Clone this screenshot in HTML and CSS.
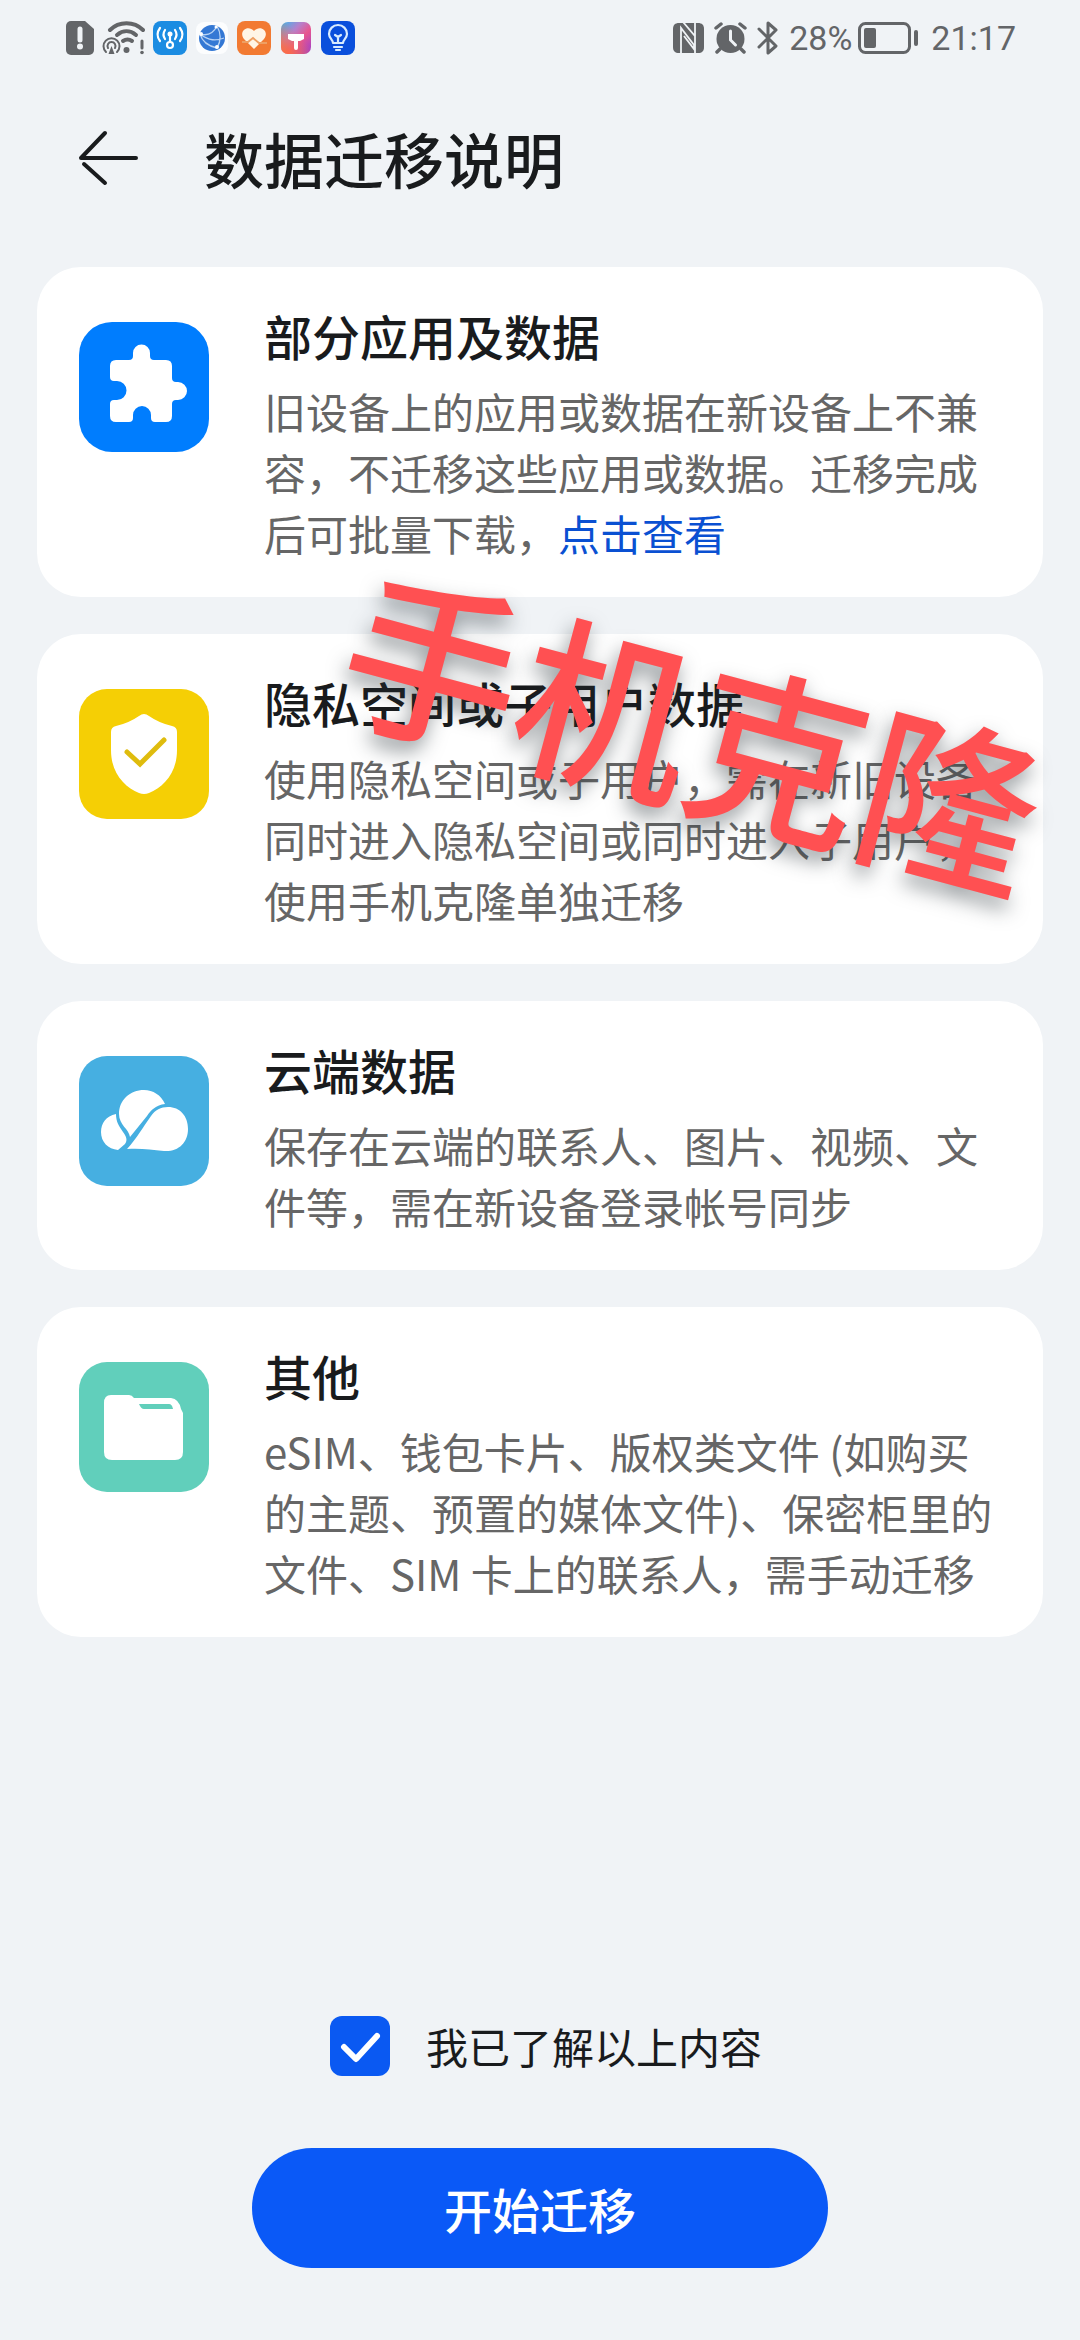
FILE: index.html
```html
<!DOCTYPE html>
<html lang="zh-CN">
<head>
<meta charset="utf-8">
<meta name="viewport" content="width=device-width, initial-scale=1">
<title>数据迁移说明</title>
<link rel="stylesheet" href="styles.css">
</head>
<body>
<div class="screen">
  <div class="status">
    <div class="status-left">
      <svg width="28" height="34" viewBox="0 0 28 34"><path d="M5 0h14l9 8v21a5 5 0 0 1-5 5H5a5 5 0 0 1-5-5V5a5 5 0 0 1 5-5z" fill="#636568"/><path d="M14 8v11" stroke="#f0f3f6" stroke-width="5" stroke-linecap="round"/><circle cx="14" cy="25.500" r="3" fill="#f0f3f6"/></svg>
      <svg class="wifi" width="43" height="34" viewBox="0 0 43 34" fill="none" stroke="#636568" stroke-linecap="round"><path d="M8 9C17 0 32 0 41 9" stroke-width="4"/><path d="M15 14c6-5 13-5 19 0" stroke-width="4"/><path d="M21 20c3-2 6-2 9 0" stroke-width="4"/><circle cx="24.500" cy="29" r="3" fill="#636568" stroke="none"/><path d="M40 20v7" stroke-width="3"/><circle cx="40" cy="31.500" r="1.800" fill="#636568" stroke="none"/><path d="M4 31a8 8 0 1 1 11 0M6 27a4 4 0 1 1 7 0" stroke-width="2"/><path d="M9.500 25l-3 8h6z" fill="#636568" stroke="none"/></svg>
      <svg class="gap-s" width="34" height="34" viewBox="0 0 34 34"><rect width="34" height="34" rx="8" fill="#1b8ce2"/><g fill="none" stroke="#fff" stroke-width="2.200" stroke-linecap="round"><path d="M7 7c-3 4-3 9 0 13M12 9c-2 3-2 6 0 9M27 7c3 4 3 9 0 13M22 9c2 3 2 6 0 9M17 13v8"/><circle cx="17" cy="24" r="3"/></g><circle cx="17" cy="13" r="2.500" fill="#fff"/></svg>
      <svg class="gap-s" width="34" height="34" viewBox="0 0 34 34"><rect x="1" y="1" width="32" height="32" rx="8" fill="#fcfdfe"/><circle cx="17" cy="17" r="13" fill="#3478d4"/><g fill="none" stroke="#b8d3f4" stroke-width="1.300"><path d="M5 13c7 2 13 0 17-8M5 13c2 7 8 12 17 14M22 5c4 7 4 15 0 22M5 13c9 7 16 7 24 4"/></g><g fill="#fff"><circle cx="6" cy="13" r="2"/><circle cx="21" cy="6" r="1.500"/><circle cx="22" cy="26" r="2"/></g></svg>
      <svg width="34" height="34" viewBox="0 0 34 34"><rect width="34" height="34" rx="8" fill="#f27a32"/><path d="M17 28L7 18C1 10 11 3 17 10c6-7 16 0 10 8z" fill="#fff5e6"/><path d="M5 21h6l5-4 6 5h8" fill="none" stroke="#ee9f62" stroke-width="1.800"/></svg>
      <svg width="30" height="32" viewBox="0 0 30 32"><defs><linearGradient id="paint" x1="0" y1="0" x2="1" y2="1"><stop offset="0" stop-color="#38b8ee"/><stop offset=".35" stop-color="#b580cc"/><stop offset=".6" stop-color="#e8568e"/><stop offset="1" stop-color="#9a3ed0"/></linearGradient><linearGradient id="warm" x1="0" y1="1" x2=".6" y2=".4"><stop offset="0" stop-color="#ff7038"/><stop offset="1" stop-color="#ff7038" stop-opacity="0"/></linearGradient></defs><rect width="30" height="32" rx="7" fill="url(#paint)"/><rect width="30" height="32" rx="7" fill="url(#warm)"/><path d="M7 12h16v5l-4 2h-2v7a2 2 0 0 1-4 0v-7h-2l-4-2z" fill="#fff"/></svg>
      <svg width="34" height="34" viewBox="0 0 34 34"><rect width="34" height="34" rx="8" fill="#0a4fdc"/><g fill="none" stroke="#d9ecff" stroke-width="2.200" stroke-linecap="round" stroke-linejoin="round"><path d="M12 22c0-3-4-5-4-9a9 9 0 0 1 18 0c0 4-4 6-4 9zM13 26h8M15 29h4M14 14l3 2 3-2M17 16v5"/></g></svg>
    </div>
    <div class="status-right">
      <svg width="31" height="32" viewBox="0 0 31 32"><path d="M6 1h19c4 0 6 2 6 6v18c0 4-2 6-6 6H6c-4 0-6-2-6-6V7c0-4 2-6 6-6z" fill="#636568"/><path d="M8 32V6l13 17v4L11 14M10 0l12 14V0M22 8v24" fill="none" stroke="#f0f3f6" stroke-width="1.800"/></svg>
      <svg width="33" height="32" viewBox="0 0 33 32"><circle cx="16.500" cy="17" r="14" fill="#636568"/><path d="M2 6l5-4M31 6l-5-4M6 27l-3 3M27 27l3 3" stroke="#636568" stroke-width="3.500" stroke-linecap="round"/><path d="M16.500 9v9l5 5" fill="none" stroke="#f0f3f6" stroke-width="3" stroke-linecap="round"/></svg>
      <svg width="22" height="34" viewBox="0 0 22 34"><path d="M2 8l17 17-8 7V2l8 7L2 26" fill="none" stroke="#636568" stroke-width="3" stroke-linecap="round" stroke-linejoin="round"/></svg>
      <span class="percent">28%</span>
      <svg width="61" height="32" viewBox="0 0 61 32"><rect x="1.500" y="1.500" width="50" height="29" rx="6" fill="none" stroke="#636568" stroke-width="3"/><rect x="6" y="6" width="12" height="20" rx="2" fill="#636568"/><rect x="56" y="8" width="4" height="16" rx="2" fill="#636568"/></svg>
      <time>21:17</time>
    </div>
  </div>

  <header class="topbar">
    <button class="back" type="button" aria-label="返回"><svg width="60" height="56" viewBox="0 0 60 56" fill="none" stroke="#191b1d" stroke-width="4" stroke-linecap="round"><path d="M58 28H3L27 3M6 34l21 19" stroke-linejoin="round"/></svg></button>
    <h1>数据迁移说明</h1>
  </header>

  <main class="cards">
    <section class="card">
      <svg class="tile" viewBox="0 0 130 130"><rect width="130" height="130" rx="33" fill="#007dfe"/><path d="M37 38h13q4 0 4-4v-3a8.500 8.500 0 0 1 17 0v3q0 4 4 4h12q6 0 6 6v12q0 4 4 4h2a9 9 0 0 1 0 18h-2q-4 0-4 4v12q0 6-6 6H76q-4 0-4-4v-3a9 9 0 0 0-18 0v3q0 4-4 4H37q-6 0-6-6V82q0-4 4-4h3a9.500 9.500 0 0 0 0-19h-3q-4 0-4-4V44q0-6 6-6z" fill="#fff"/></svg>
      <div class="info">
        <h2>部分应用及数据</h2>
        <p>旧设备上的应用或数据在新设备上不兼容，不迁移这些应用或数据。迁移完成后可批量下载，<a href="#">点击查看</a></p>
      </div>
    </section>
    <section class="card">
      <svg class="tile" viewBox="0 0 130 130"><rect width="130" height="130" rx="28" fill="#f5cf05"/><path d="M60 27q5-4 10 0 10 7 23 10 5 1 5 6v18c0 24-14 37-28 43q-5 2-10 0C46 98 32 85 32 61V43q0-5 5-6 13-3 23-10z" fill="#fff"/><path d="M48 63l13 12 24-24" fill="none" stroke="#dfbc0d" stroke-width="5" stroke-linecap="round"/></svg>
      <div class="info">
        <h2>隐私空间或子用户数据</h2>
        <p>使用隐私空间或子用户，需在新旧设备同时进入隐私空间或同时进入子用户，使用手机克隆单独迁移</p>
      </div>
    </section>
    <section class="card">
      <svg class="tile" viewBox="0 0 130 130"><rect width="130" height="130" rx="28" fill="#46afe1"/><g fill="#fff"><path d="M37 58C27 60 22 67 22 76c0 10 7 17 17 18l7-6c3-4 1-8-2-12-4-6-7-10-7-18z"/><path d="M40 58c0-14 11-24 25-24 9 0 17 5 21 14-9 1-14 6-18 12L51 81c-1-8-11-12-11-23z"/><path d="M48 93C58 82 64 71 72 60c4-6 10-9 17-9 12 0 20 9 20 22 0 14-10 23-24 22-13-1-22-3-37-2z"/></g></svg>
      <div class="info">
        <h2>云端数据</h2>
        <p>保存在云端的联系人、图片、视频、文件等，需在新设备登录帐号同步</p>
      </div>
    </section>
    <section class="card">
      <svg class="tile" viewBox="0 0 130 130"><rect width="130" height="130" rx="28" fill="#61cfbb"/><path d="M32 33h18q3 0 5 3h37q8 1 10 11l2 4v39q0 8-8 8H33q-8 0-8-8V41q0-8 7-8z" fill="#fff"/><path d="M60 42h30q3 0 4 5H65q-3 0-5-5z" fill="#61cfbb"/></svg>
      <div class="info">
        <h2>其他</h2>
        <p>eSIM、钱包卡片、版权类文件 (如购买的主题、预置的媒体文件)、保密柜里的文件、SIM 卡上的联系人，需手动迁移</p>
      </div>
    </section>
    <div class="stamp">手机克隆</div>
  </main>

  <footer class="actions">
    <label class="agree"><input type="checkbox" checked><span>我已了解以上内容</span></label>
    <button class="start" type="button">开始迁移</button>
  </footer>
</div>
</body>
</html>
```
FILE: styles.css
```css
* { box-sizing: border-box; }
body {
  margin: 0;
  background: #f0f3f6;
  color: #191b1d;
  font-family: "Noto Sans CJK SC", sans-serif;
}
h1, h2, p { margin: 0; }
svg { display: block; flex: none; }
button { border: 0; padding: 0; font: inherit; cursor: pointer; }

.screen {
  min-height: 100vh;
  display: flex;
  flex-direction: column;
}

.status {
  display: flex;
  justify-content: space-between;
  align-items: center;
  height: 76px;
  padding: 0 64px 0 66px;
  color: #636568;
  font: 400 34px/40px Roboto, sans-serif;
}
.status-left, .status-right { display: flex; align-items: center; gap: 10px; }
.wifi { margin: 0 -2px; }
.gap-s { margin-right: -2px; }
.percent { margin-right: -4px; }
.status-right time { margin-left: 2px; }

.topbar {
  display: flex;
  align-items: center;
  gap: 66px;
  padding: 42px 78px 44px;
}
.back { background: none; }
.topbar h1 { font-size: 60px; font-weight: 500; line-height: 80px; }

.cards {
  position: relative;
  display: flex;
  flex-direction: column;
  gap: 37px;
  margin-top: 25px;
  padding: 0 37px;
}
.card {
  display: flex;
  align-items: flex-start;
  gap: 55px;
  padding: 35px 42px 34px;
  border-radius: 44px;
  background: #fff;
}
.tile { width: 130px; height: 130px; margin-top: 20px; }
.info { flex: 1; }
.info h2 { font-size: 48px; font-weight: 500; line-height: 66px; }
.info p {
  margin-top: 12px;
  color: #666;
  font-size: 42px;
  line-height: 61px;
}
.info a { color: #0a50d2; text-decoration: none; }

.stamp {
  position: absolute;
  top: 458px;
  left: 694px;
  color: #ff5052;
  font-size: 178px;
  font-weight: 500;
  line-height: 1;
  white-space: nowrap;
  text-shadow: 0 10px 20px rgba(40, 50, 55, .5);
  transform: translate(-50%, -50%) rotate(15deg);
  pointer-events: none;
}

.actions {
  display: flex;
  flex-direction: column;
  align-items: center;
  gap: 72px;
  margin-top: auto;
  padding: 72px 0;
}
.agree {
  display: flex;
  align-items: center;
  gap: 36px;
  padding-left: 12px;
  font-size: 42px;
  line-height: 60px;
}
.agree input {
  appearance: none;
  width: 60px;
  height: 60px;
  margin: 0;
  border-radius: 12px;
  background: #0a59f2 url("data:image/svg+xml,%3Csvg xmlns='http://www.w3.org/2000/svg' viewBox='0 0 60 60'%3E%3Cpath d='M14 31l12 12 21-23' fill='none' stroke='%23fff' stroke-width='6' stroke-linecap='round' stroke-linejoin='round'/%3E%3C/svg%3E") center / 100%;
}
.start {
  width: 576px;
  max-width: 90%;
  height: 120px;
  border-radius: 60px;
  background: #0a59f7;
  color: #fff;
  font-size: 48px;
  font-weight: 500;
}
```
